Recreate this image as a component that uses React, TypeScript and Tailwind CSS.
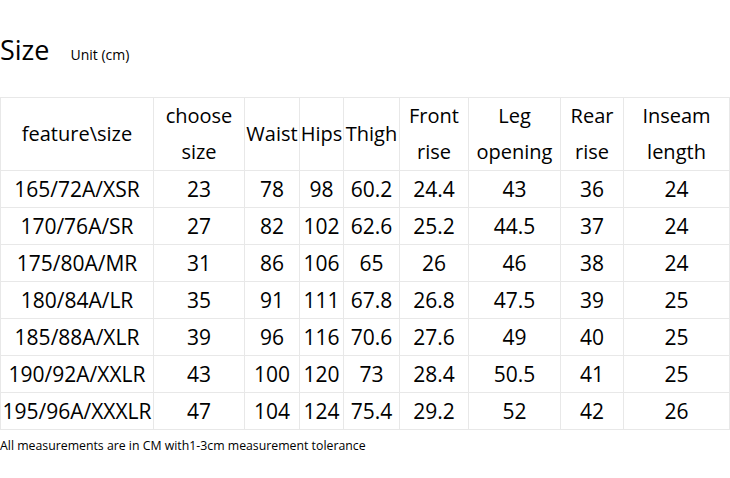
import React from "react";

const headers: string[][] = [
  ["feature\\size"],
  ["choose", "size"],
  ["Waist"],
  ["Hips"],
  ["Thigh"],
  ["Front", "rise"],
  ["Leg", "opening"],
  ["Rear", "rise"],
  ["Inseam", "length"],
];

const rows: string[][] = [
  ["165/72A/XSR", "23", "78", "98", "60.2", "24.4", "43", "36", "24"],
  ["170/76A/SR", "27", "82", "102", "62.6", "25.2", "44.5", "37", "24"],
  ["175/80A/MR", "31", "86", "106", "65", "26", "46", "38", "24"],
  ["180/84A/LR", "35", "91", "111", "67.8", "26.8", "47.5", "39", "25"],
  ["185/88A/XLR", "39", "96", "116", "70.6", "27.6", "49", "40", "25"],
  ["190/92A/XXLR", "43", "100", "120", "73", "28.4", "50.5", "41", "25"],
  ["195/96A/XXXLR", "47", "104", "124", "75.4", "29.2", "52", "42", "26"],
];

export default function App() {
  return (
    <div
      className="w-[730px] h-[478px] bg-white text-black overflow-hidden"
      style={{ fontFamily: '"Open Sans", "Noto Sans", sans-serif' }}
    >
      <div className="h-[97px] pt-[35px] flex items-baseline leading-[30px]">
        <span className="text-[27px]">Size</span>
        <span className="ml-[21px] text-[14px]">Unit (cm)</span>
      </div>
      <div className="grid grid-cols-[153px_91px_55px_44px_56px_69px_92px_63px_106px] border-l border-t border-[#e8e8e8] w-[730px]">
        {headers.map((h, i) => (
          <div
            key={i}
            className="h-[73px] border-r border-b border-[#e8e8e8] flex flex-col items-center justify-center text-[20px] leading-[36px] whitespace-nowrap"
          >
            {h.map((l, j) => (
              <span key={j}>{l}</span>
            ))}
          </div>
        ))}
        {rows.map((r, ri) =>
          r.map((c, ci) => (
            <div
              key={`${ri}-${ci}`}
              className="h-[37px] border-r border-b border-[#e8e8e8] flex items-center justify-center text-[21px] leading-[36px] whitespace-nowrap"
            >
              {c}
            </div>
          ))
        )}
      </div>
      <div className="mt-[8px] text-[12.3px] leading-[16px]">
        All measurements are in CM with1-3cm measurement tolerance
      </div>
    </div>
  );
}
